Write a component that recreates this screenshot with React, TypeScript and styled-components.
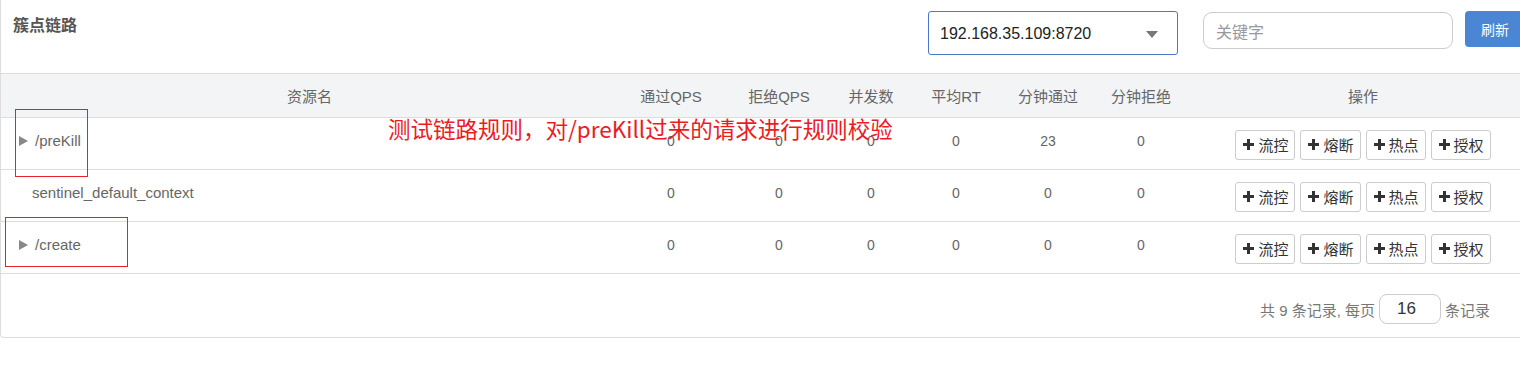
import styled, { createGlobalStyle } from 'styled-components';

const GlobalStyle = createGlobalStyle`
  html, body {
    margin: 0;
    padding: 0;
    background: #fff;
    overflow: hidden;
  }
  body {
    font-family: "Liberation Sans", "Noto Sans CJK SC", sans-serif;
    font-size: 14px;
    color: #666;
  }
`;

const COLS = '617px 106px 110px 74px 96px 88px 98px 346px';

const rows = [
  { name: '/preKill', tree: true, values: [0, 0, 0, 0, 23, 0] },
  { name: 'sentinel_default_context', tree: false, values: [0, 0, 0, 0, 0, 0] },
  { name: '/create', tree: true, values: [0, 0, 0, 0, 0, 0] },
];

const headers = ['通过QPS', '拒绝QPS', '并发数', '平均RT', '分钟通过', '分钟拒绝'];
const actions = ['流控', '熔断', '热点', '授权'];

function PlusIcon() {
  return (
    <svg width="11" height="11" viewBox="0 0 11 11">
      <path d="M4 0h3v4h4v3H7v4H4V7H0V4h4z" fill="#333" />
    </svg>
  );
}

function Caret() {
  return (
    <svg width="12" height="7" viewBox="0 0 12 7">
      <path d="M0 0h12L6 7z" fill="#777" />
    </svg>
  );
}

function TreeArrow() {
  return (
    <svg width="9" height="10" viewBox="0 0 9 10">
      <path d="M0 0l9 5-9 5z" fill="#888" />
    </svg>
  );
}

export default function App() {
  return (
    <Page>
      <GlobalStyle />
      <Card>
        <Header>
          <Title>簇点链路</Title>
          <Tools>
            <Select>
              <span>192.168.35.109:8720</span>
              <Caret />
            </Select>
            <Search placeholder="关键字" />
            <RefreshButton>刷新</RefreshButton>
          </Tools>
        </Header>

        <HeadRow>
          <HeadCell>资源名</HeadCell>
          {headers.map((h) => (
            <HeadCell key={h}>{h}</HeadCell>
          ))}
          <HeadCell>操作</HeadCell>
        </HeadRow>

        {rows.map((r) => (
          <Row key={r.name}>
            <NameCell $tree={r.tree}>
              {r.tree && <TreeArrow />}
              <span>{r.name}</span>
            </NameCell>
            {r.values.map((v, i) => (
              <Cell key={i}>{v}</Cell>
            ))}
            <ActionCell>
              {actions.map((a) => (
                <ActionButton key={a}>
                  <PlusIcon />
                  {a}
                </ActionButton>
              ))}
            </ActionCell>
          </Row>
        ))}

        <Footer>
          <span>共 9 条记录, 每页</span>
          <PageSize value="16" readOnly />
          <span>条记录</span>
        </Footer>
      </Card>

      <Mark style={{ left: 15, top: 109, width: 73, height: 68 }} />
      <Mark style={{ left: 5, top: 217, width: 123, height: 50 }} />
      <Note>测试链路规则，对/preKill过来的请求进行规则校验</Note>
    </Page>
  );
}

const Page = styled.div`
  position: relative;
  width: 1520px;
  height: 366px;
  overflow: hidden;
`;

const Card = styled.div`
  width: 1535px;
  border: 1px solid #ddd;
  border-top: none;
  border-radius: 0 0 4px 4px;
  box-sizing: border-box;
  height: 338px;
`;

const Header = styled.div`
  display: flex;
  justify-content: space-between;
  align-items: flex-start;
  height: 74px;
  box-sizing: border-box;
  border-bottom: 1px solid #ddd;
`;

const Title = styled.h3`
  margin: 12px 0 0 12px;
  font-family: "Noto Sans CJK SC", sans-serif;
  font-size: 16px;
  font-weight: bold;
  color: #555;
`;

const Tools = styled.div`
  display: flex;
  align-items: flex-start;
  padding-top: 11px;
  margin-right: 9px;
`;

const Select = styled.div`
  width: 250px;
  height: 44px;
  box-sizing: border-box;
  border: 1px solid #4a78c2;
  border-radius: 3px;
  display: flex;
  align-items: center;
  justify-content: space-between;
  padding: 2px 19px 0 11px;
  font-size: 16px;
  color: #222;
`;

const Search = styled.input`
  margin-left: 25px;
  margin-top: 1px;
  width: 250px;
  height: 37px;
  box-sizing: border-box;
  border: 1px solid #ccc;
  border-radius: 9px;
  padding: 0 12px;
  font-family: "Noto Sans CJK SC", sans-serif;
  font-size: 16px;
  outline: none;
  &::placeholder {
    color: #999;
  }
`;

const RefreshButton = styled.button`
  margin-left: 12px;
  width: 60px;
  height: 36px;
  border: none;
  border-radius: 4px;
  background: #4a86d4;
  color: #fff;
  font-family: "Noto Sans CJK SC", sans-serif;
  font-size: 14px;
  padding: 0;
`;

const HeadRow = styled.div`
  display: grid;
  grid-template-columns: ${COLS};
  height: 44px;
  background: #f3f4f6;
  border-bottom: 1px solid #ddd;
  box-sizing: border-box;
`;

const HeadCell = styled.div`
  display: flex;
  align-items: center;
  justify-content: center;
  font-family: "Liberation Sans", "Noto Sans CJK SC", sans-serif;
  font-size: 15px;
  color: #666;
`;

const Row = styled.div`
  display: grid;
  grid-template-columns: ${COLS};
  height: 52px;
  border-bottom: 1px solid #ddd;
  box-sizing: border-box;
`;

const Cell = styled.div`
  display: flex;
  align-items: center;
  justify-content: center;
  font-size: 14px;
  color: #666;
  padding-bottom: 6px;
`;

const NameCell = styled.div<{ $tree: boolean }>`
  display: flex;
  align-items: center;
  gap: 7px;
  padding-left: ${(p) => (p.$tree ? '18px' : '31px')};
  padding-bottom: 6px;
  font-size: 15px;
  color: #666;
`;

const ActionCell = styled.div`
  display: flex;
  align-items: center;
  justify-content: center;
  gap: 5px;
  padding-top: 2px;
`;

const ActionButton = styled.button`
  display: flex;
  align-items: center;
  gap: 4px;
  height: 30px;
  padding: 0 6px 0 7px;
  background: #fff;
  border: 1px solid #ccc;
  border-radius: 3px;
  font-family: "Noto Sans CJK SC", sans-serif;
  font-size: 15px;
  color: #333;
`;

const Footer = styled.div`
  display: flex;
  justify-content: flex-end;
  align-items: center;
  gap: 4px;
  padding: 20px 44px 0 0;
  font-family: "Liberation Sans", "Noto Sans CJK SC", sans-serif;
  font-size: 15px;
  color: #777;
`;

const PageSize = styled.input`
  width: 62px;
  height: 30px;
  box-sizing: border-box;
  border: 1px solid #ccc;
  border-radius: 8px;
  padding: 0 0 0 17px;
  font-family: "Liberation Sans", sans-serif;
  font-size: 17px;
  color: #333;
  outline: none;
`;

const Mark = styled.div`
  position: absolute;
  border: 1px solid #e8202a;
  box-sizing: border-box;
`;

const Note = styled.div`
  position: absolute;
  left: 388px;
  top: 113px;
  font-family: "Noto Sans CJK SC", sans-serif;
  font-size: 22.5px;
  line-height: 30px;
  color: #ec1c24;
  white-space: nowrap;
`;
